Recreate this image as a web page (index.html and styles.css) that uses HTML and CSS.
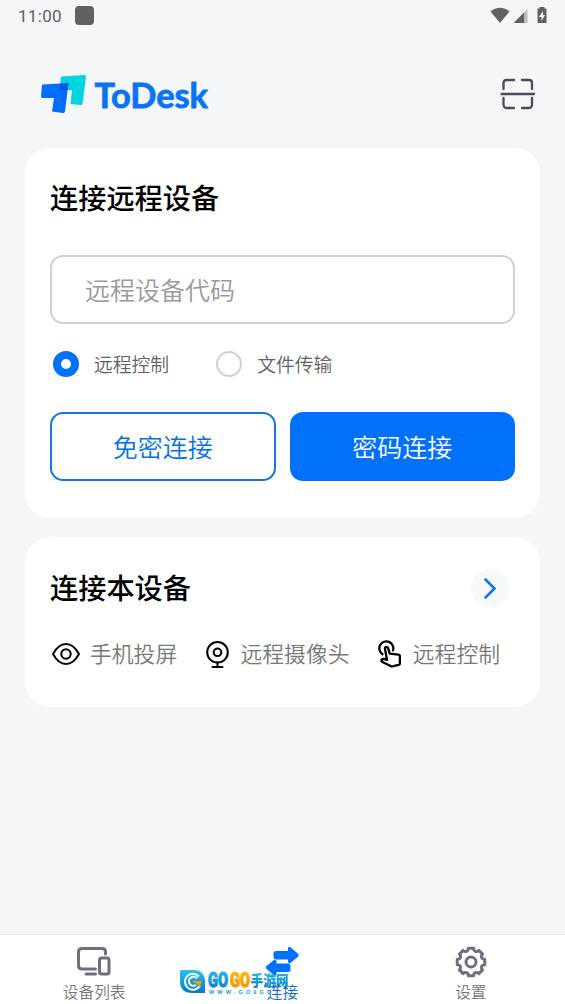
FILE: index.html
```html
<!DOCTYPE html>
<html lang="zh-CN">
<head>
  <meta charset="utf-8">
  <title>ToDesk</title>
  <link rel="stylesheet" href="styles.css">
</head>
<body>
  <div class="status">
    <span class="time">11:00</span>
    <span class="notice"></span>
    <svg class="signals" width="58" height="18" viewBox="0 0 58 18">
      <path d="M.5 4.5Q10 -3 19.500 4.500L10 16z" fill="#616161"/>
      <path d="M23.500 16L34 5.500V16z" fill="#616161"/>
      <path d="M34 5.500L37.500 2V16H34z" fill="#bdbdbd"/>
      <path d="M49.500 1.500V0h5v1.500H56.500V16H47.500V1.500z" fill="#616161"/>
      <path d="M53 4L49 10h2.500v4L55 8h-2z" fill="#f4f6f8"/>
    </svg>
  </div>

  <header class="header">
    <svg width="170" height="40" viewBox="0 0 170 40">
      <path d="M20 1.500L43.500 0Q45 0 45 1.500L41.500 29Q41.300 30 40 30L29.500 29 31 15H18.500z" fill="#00d5df"/>
      <path d="M1.500 9.500L27.500 8 24 36.500Q23.800 38 22 38L11 36.500 13 23H1.500Q0 23 0 21.500L1 10z" fill="#006fff"/>
      <path d="M19.200 8.400L27.500 8 26.600 15H18.500z" fill="#0057e6"/>
      <text class="brand" x="53.500" y="32.700" textLength="113.500" lengthAdjust="spacingAndGlyphs">ToDesk</text>
    </svg>
    <svg class="scan" width="36" height="32" viewBox="0 0 36 32">
      <path d="M3.500 11V5Q3.500 2 6.500 2H14M22 2h7q3 0 3 3v6M3.500 20v6q0 4 3 4H14M22 30h7q3 0 3-4v-6M1.500 16H34"/>
    </svg>
  </header>

  <section class="card remote">
    <h2>连接远程设备</h2>
    <input class="code" type="text" placeholder="远程设备代码">
    <div class="modes">
      <label class="mode"><span class="dot checked"></span>远程控制</label>
      <label class="mode"><span class="dot"></span>文件传输</label>
    </div>
    <div class="buttons">
      <button class="btn">免密连接</button>
      <button class="btn primary">密码连接</button>
    </div>
  </section>

  <section class="card local">
    <div class="local-head">
      <h2>连接本设备</h2>
      <span class="go">
        <svg width="38" height="38" viewBox="0 0 38 38"><path d="M14.500 10.500L23.500 19.500 14.500 28.500"/></svg>
      </span>
    </div>
    <div class="features">
      <div class="feature eye">
        <svg width="28" height="28" viewBox="0 0 28 28">
          <path d="M1 14Q6.500 4 14 4T27 14Q21.500 24 14 24T1 14z"/>
          <circle cx="14" cy="14" r="4.700"/>
        </svg>
        <span>手机投屏</span>
      </div>
      <div class="feature">
        <svg width="24" height="28" viewBox="0 0 24 28">
          <circle cx="12.500" cy="12.300" r="10.300"/>
          <circle cx="12.500" cy="12.300" r="3.800"/>
          <path d="M12.500 22.600V27M7.500 27H17.500"/>
        </svg>
        <span>远程摄像头</span>
      </div>
      <div class="feature hand">
        <svg width="24" height="28" viewBox="0 0 24 28">
          <path d="M5.500 14.200A7 7 0 1 1 16 10.500"/>
          <path d="M8 9Q7.700 7.200 9.300 6.900 10.900 6.800 11.300 8.600L12.700 13.700 21.500 14.600Q23 15 22.900 16.500V23.500Q22.800 24.600 21.600 24.800L15.500 26.300Q14.500 26.600 13.500 26L5.500 22Q3.800 20.800 4.700 19.600 5.800 18.600 7.500 19.200L10 20z"/>
        </svg>
        <span>远程控制</span>
      </div>
    </div>
  </section>

  <nav class="tabs">
    <div class="tab">
      <svg width="36" height="32" viewBox="0 0 36 32">
        <path d="M29.500 8V6Q29.500 2.500 26 2.500H6Q2.500 2.500 2.500 6V19.500Q2.500 23 6 23H19.500M10 28H19.500"/>
        <rect x="23.500" y="12" width="9.500" height="16" rx="2"/>
      </svg>
      <span>设备列表</span>
    </div>
    <div class="tab active">
      <svg width="36" height="32" viewBox="0 0 36 32">
        <path d="M12 5H24V2.500Q24 0 26.500 1.200L34 7.700Q35.500 9.200 34 10.700L26.500 17Q24 18 24 15.500V13.500H12Q9.500 13.500 9.500 11V7.500Q9.500 5 12 5z"/>
        <path d="M24 17.500H12.500V15.500Q12.500 13 10 14L2.500 20Q1 21.500 2.500 23L10 29Q12.500 30 12.500 27.500V26H24Q26.500 26 26.500 23.500V20Q26.500 17.500 24 17.500z"/>
      </svg>
      <span>连接</span>
    </div>
    <div class="tab">
      <svg width="36" height="32" viewBox="-18 -16 36 32">
        <path d="M13.740 -2.670L13.740 2.670A2.900 2.900 0 0 0 11.600 7.830L7.830 11.600A2.900 2.900 0 0 0 2.670 13.740L-2.670 13.740A2.900 2.900 0 0 0 -7.830 11.600L-11.600 7.830A2.900 2.900 0 0 0 -13.740 2.670L-13.740 -2.670A2.900 2.900 0 0 0 -11.600 -7.830L-7.830 -11.600A2.900 2.900 0 0 0 -2.670 -13.740L2.670 -13.740A2.900 2.900 0 0 0 7.830 -11.600L11.600 -7.830A2.900 2.900 0 0 0 13.740 -2.670z"/>
        <circle cx="0" cy="0" r="5"/>
      </svg>
      <span>设置</span>
    </div>

    <svg class="watermark" width="120" height="28" viewBox="0 0 120 28">
      <defs>
        <linearGradient id="blue" x1="0" y1="0" x2="0" y2="1"><stop offset="0" stop-color="#25c3ef"/><stop offset="1" stop-color="#0679c6"/></linearGradient>
        <linearGradient id="orange" x1="0" y1="0" x2="0" y2="1"><stop offset="0" stop-color="#ffc400"/><stop offset="1" stop-color="#f58a00"/></linearGradient>
      </defs>
      <path d="M1.500 1H13Q25 1 25 13V24H12Q0 24 0 12V2.500Q0 1 1.500 1z" fill="url(#blue)"/>
      <path d="M19 7.500A8 8 0 1 0 20 16.500M17 9.500A4.500 4.500 0 1 0 16 16" fill="none" stroke="#fff" stroke-width="2"/>
      <path d="M12 12H22L19.500 18 16.500 15z" fill="#ff9c00"/>
      <text class="wm-name" x="28" y="17.500" textLength="20" lengthAdjust="spacingAndGlyphs" fill="url(#blue)" stroke="url(#blue)">GO</text>
      <text class="wm-name" x="50" y="17.500" textLength="20" lengthAdjust="spacingAndGlyphs" fill="url(#orange)" stroke="url(#orange)">GO</text>
      <text class="wm-cn" x="70.500" y="17" textLength="38" lengthAdjust="spacingAndGlyphs" fill="url(#blue)">手游网</text>
      <text class="wm-url" x="29" y="24.500" textLength="67">WWW.GO9GO.</text>
    </svg>
  </nav>
</body>
</html>
```

FILE: styles.css
```css
* {
  box-sizing: border-box;
}

body {
  display: flex;
  flex-direction: column;
  height: 1004px;
  margin: 0;
  overflow: hidden;
  background: #f4f6f8;
  font-family: "Noto Sans CJK SC", sans-serif;
}

svg {
  display: block;
  flex: none;
}

.status {
  display: flex;
  align-items: center;
  height: 31px;
  padding: 0 17px 0 18px;
}

.time {
  font: 400 17px Roboto, sans-serif;
  letter-spacing: 0.3px;
  color: #616161;
}

.notice {
  width: 19px;
  height: 19px;
  margin-left: 13px;
  border-radius: 4px;
  background: #616161;
}

.signals {
  margin-left: auto;
}

.header {
  display: flex;
  justify-content: space-between;
  height: 117px;
  padding: 44px 29px 0 41px;
}

.brand {
  font: 700 34px Lato, sans-serif;
  fill: #0a73f5;
  stroke: #0a73f5;
  stroke-width: 0.8;
  stroke-linejoin: round;
}

.scan {
  margin-top: 3px;
  fill: none;
  stroke: #4a4b5c;
  stroke-width: 2.3;
  stroke-linecap: round;
}

.card {
  margin: 0 25px;
  padding: 0 25px;
  border-radius: 25px;
  background: #fff;
}

.remote {
  height: 370px;
  padding-top: 29px;
}

.local {
  height: 170px;
  margin-top: 19px;
  padding-top: 30px;
}

h2 {
  margin: 0;
  font-size: 28.2px;
  font-weight: 500;
  line-height: 40px;
  color: #000;
}

.code {
  display: block;
  width: 100%;
  height: 69px;
  margin-top: 38px;
  padding: 0 33px 2px;
  border: 2px solid #d0d0d4;
  border-radius: 13px;
  background: #fff;
  font: 350 25px "Noto Sans CJK SC", sans-serif;
}

.code::placeholder {
  color: #999;
  opacity: 1;
}

.modes {
  display: flex;
  height: 26px;
  margin: 27px 0 35px 3px;
  gap: 47px;
}

.mode {
  display: flex;
  align-items: center;
  gap: 15px;
  font-size: 18.8px;
  font-weight: 350;
  line-height: 26px;
  color: #606266;
}

.dot {
  width: 26px;
  height: 26px;
  border: 2px solid #d0d0d4;
  border-radius: 50%;
}

.dot.checked {
  border: 8px solid #0071fa;
}

.buttons {
  display: flex;
  gap: 14px;
}

.btn {
  flex: 1;
  height: 69px;
  padding: 0 0 2px;
  border: 2px solid #1675df;
  border-radius: 13px;
  background: #fff;
  font: 350 25px "Noto Sans CJK SC", sans-serif;
  color: #0071e6;
}

.btn.primary {
  border-color: #0071fa;
  background: #0071fa;
  color: #fff;
}

.local-head {
  display: flex;
  justify-content: space-between;
  height: 40px;
  padding-right: 6px;
}

.go {
  width: 38px;
  height: 38px;
  margin-top: 2px;
  border-radius: 50%;
  background: #f6f8fa;
}

.go path {
  fill: none;
  stroke: #1275e8;
  stroke-width: 2.6;
  stroke-linecap: round;
}

.features {
  display: flex;
  justify-content: space-between;
  height: 32px;
  margin-top: 30px;
  padding: 0 15px 0 2px;
}

.feature {
  display: flex;
  align-items: center;
  gap: 12px;
  font-size: 21.8px;
  font-weight: 350;
  line-height: 32px;
  color: #777;
}

.feature.eye {
  gap: 10px;
}

.feature svg {
  margin-top: 1px;
  fill: none;
  stroke: #000;
  stroke-width: 2;
  stroke-linecap: round;
  stroke-linejoin: round;
}

.feature.hand svg {
  stroke-width: 2.3;
}

.tabs {
  position: relative;
  display: flex;
  height: 70px;
  margin-top: auto;
  border-top: 1px solid #e8eaec;
  background: #fff;
}

.tab {
  flex: 1;
  display: flex;
  flex-direction: column;
  align-items: center;
  padding-top: 11px;
  font-size: 15.7px;
  font-weight: 350;
  line-height: 24px;
  color: #777;
}

.tab svg {
  margin-bottom: 2px;
  fill: none;
  stroke: #6b707c;
  stroke-width: 3;
  stroke-linecap: round;
  stroke-linejoin: round;
}

.tab.active {
  color: #1269c8;
}

.tab.active svg {
  fill: #0071fa;
  stroke: none;
}

/* site mark lying over the middle tab */
.watermark {
  position: absolute;
  left: 180px;
  top: 34px;
}

.wm-name {
  font: 900 20px Roboto, sans-serif;
  stroke-width: 1;
}

.wm-cn {
  font: 900 15px "Noto Sans CJK SC", sans-serif;
}

.wm-url {
  font: 700 5.5px "Liberation Sans", sans-serif;
  fill: #1b98d8;
}
```
